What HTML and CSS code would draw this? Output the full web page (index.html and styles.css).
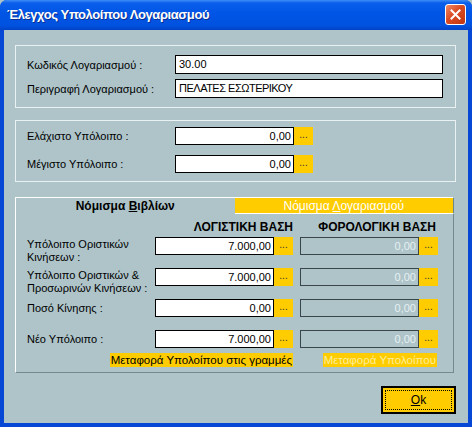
FILE: index.html
```html
<!DOCTYPE html>
<html lang="el">
<head>
  <meta charset="UTF-8">
  <title>Έλεγχος Υπολοίπου Λογαριασμού</title>
  <link rel="stylesheet" href="styles.css">
</head>
<body>
  <div class="window">
    <div class="titlebar">
      <span class="title">Έλεγχος Υπολοίπου Λογαριασμού</span>
      <span class="close">
        <svg width="11" height="11" viewBox="0 0 11 11"><path d="M1.5 1.5 L9.5 9.5 M9.5 1.5 L1.5 9.5" stroke="#fff" stroke-width="2" stroke-linecap="square"/></svg>
      </span>
    </div>

    <div class="client">
      <!-- account -->
      <div class="group group-account">
        <div class="row">
          <span class="label">Κωδικός Λογαριασμού :</span>
          <div class="field field-wide">30.00</div>
        </div>
        <div class="row">
          <span class="label">Περιγραφή Λογαριασμού :</span>
          <div class="field field-wide caps">ΠΕΛΑΤΕΣ ΕΣΩΤΕΡΙΚΟΥ</div>
        </div>
      </div>

      <!-- limits -->
      <div class="group group-limits">
        <div class="row">
          <span class="label">Ελάχιστο Υπόλοιπο :</span>
          <div class="amount">
            <div class="field num">0,00</div>
            <span class="dots">...</span>
          </div>
        </div>
        <div class="row">
          <span class="label">Μέγιστο Υπόλοιπο :</span>
          <div class="amount">
            <div class="field num">0,00</div>
            <span class="dots">...</span>
          </div>
        </div>
      </div>

      <!-- tabs -->
      <div class="tabs">
        <div class="tab-strip">
          <div class="tab active">Νόμισμα <u>Β</u>ιβλίων</div>
          <div class="tab">Νόμισμα <u>Λ</u>ογαριασμού</div>
        </div>
        <div class="panel">
          <div class="grid head">
            <span></span>
            <span class="col-head">ΛΟΓΙΣΤΙΚΗ ΒΑΣΗ</span>
            <span class="col-head">ΦΟΡΟΛΟΓΙΚΗ ΒΑΣΗ</span>
          </div>

          <div class="grid line first">
            <span class="label two">Υπόλοιπο Οριστικών<br>Κινήσεων :</span>
            <div class="amount"><div class="field num">7.000,00</div><span class="dots">...</span></div>
            <div class="amount"><div class="field num off">0,00</div><span class="dots">...</span></div>
          </div>

          <div class="grid line">
            <span class="label two">Υπόλοιπο Οριστικών &amp;<br>Προσωρινών Κινήσεων :</span>
            <div class="amount"><div class="field num">7.000,00</div><span class="dots">...</span></div>
            <div class="amount"><div class="field num off">0,00</div><span class="dots">...</span></div>
          </div>

          <div class="grid line">
            <span class="label">Ποσό Κίνησης :</span>
            <div class="amount"><div class="field num">0,00</div><span class="dots">...</span></div>
            <div class="amount"><div class="field num off">0,00</div><span class="dots">...</span></div>
          </div>

          <div class="grid line">
            <span class="label">Νέο Υπόλοιπο :</span>
            <div class="amount"><div class="field num">7.000,00</div><span class="dots">...</span></div>
            <div class="amount"><div class="field num off">0,00</div><span class="dots">...</span></div>
          </div>

          <div class="grid links">
            <span class="link">Μεταφορά Υπολοίπου στις γραμμές</span>
            <span class="link disabled">Μεταφορά Υπολοίπου</span>
          </div>
        </div>
      </div>

      <div class="footer">
        <div class="ok"><span class="focus"><u>O</u>k</span></div>
      </div>
    </div>
  </div>
</body>
</html>
```

FILE: styles.css
```css
* {
  margin: 0;
  padding: 0;
  box-sizing: border-box;
}

body {
  font-family: 'Liberation Sans', Arial, sans-serif;
  font-size: 11px;
  color: #000;
  background: #aec4c9;
}

.window {
  width: 472px;
  height: 427px;
  display: flex;
  flex-direction: column;
  background: #0747d6;
  border-radius: 7px 7px 0 0;
  overflow: hidden;
}

.titlebar {
  height: 30px;
  flex-shrink: 0;
  display: flex;
  align-items: center;
  justify-content: space-between;
  padding: 0 6px 1px 7px;
  background: linear-gradient(to bottom, #3d8cf6 0, #0a5eea 3px, #0055e6 45%, #0052df 85%, #0043c6 100%);
}

.title {
  color: #fff;
  font-weight: bold;
  font-size: 13px;
  letter-spacing: -0.4px;
  text-shadow: 1px 1px 0 #0a2f8f;
}

.close {
  width: 21px;
  height: 21px;
  display: flex;
  align-items: center;
  justify-content: center;
  border: 1px solid #fff;
  border-radius: 3px;
  background: linear-gradient(135deg, #ef8a68, #db4b22 45%, #c0360f);
}

.client {
  flex: 1;
  margin: 0 4px 4px 4px;
  background: #aec4c9;
  padding: 15px 12px 0 11px;
}

.group {
  border: 1px solid #e9f1f3;
  padding-left: 11px;
}

.group-account {
  height: 63px;
  padding-top: 9px;
}

.group-limits {
  height: 62px;
  margin-top: 12px;
  padding-top: 6px;
}

.row {
  display: flex;
  align-items: center;
}

.group-account .row + .row {
  margin-top: 5px;
}

.group-limits .row + .row {
  margin-top: 10px;
}

.group .label {
  width: 148px;
}

.field {
  height: 19px;
  line-height: 17px;
  background: #fff;
  border: 1px solid #000;
  padding: 0 3px;
  white-space: nowrap;
  overflow: hidden;
}

.field-wide {
  width: 268px;
}

.caps {
  letter-spacing: -0.5px;
}

.group-limits .field {
  height: 18px;
  line-height: 16px;
}

.amount {
  display: flex;
  width: 138px;
  height: 18px;
}

.amount .field {
  flex: 1;
  height: 18px;
  line-height: 16px;
}

.num {
  text-align: right;
  padding: 0 2px;
}

.off {
  background: #aec4c9;
  border-color: #3a4648;
  color: #e6f0f2;
}

.dots {
  width: 19px;
  background: #ffcc00;
  font-size: 10px;
  line-height: 16px;
  text-align: center;
  color: #333;
}

.tabs {
  margin-top: 15px;
  width: 439px;
}

.tab-strip {
  display: flex;
  height: 17px;
}

.tab {
  flex: 1;
  text-align: center;
  line-height: 16px;
  font-size: 12px;
  border-top: 1px solid #fff;
}

.tab.active {
  font-weight: bold;
  border-left: 1px solid #fff;
}

.tab:not(.active) {
  background: #ffcc00;
  color: #fff;
  border-right: 1px solid #6f868b;
  border-bottom: 1px solid #fff;
}

.panel {
  height: 159px;
  border-left: 1px solid #fff;
  border-right: 1px solid #72898e;
  border-bottom: 1px solid #72898e;
  padding: 5px 0 0 11px;
}

.grid {
  display: grid;
  grid-template-columns: 121px 138px 136px;
  column-gap: 7px;
}

.head {
  height: 18px;
  line-height: 17px;
}

.col-head {
  text-align: right;
  font-weight: bold;
  font-size: 12px;
}

.line {
  height: 18px;
  margin-top: 14px;
}

.line.first {
  margin-top: 0;
}

.line + .line:not(.first) {
  margin-top: 13px;
}

.line .label {
  line-height: 18px;
  white-space: nowrap;
}

.line .label.two {
  line-height: 13px;
  padding-top: 1px;
}

.links {
  margin-top: 5px;
  height: 14px;
}

.link {
  background: #ffcc00;
  font-size: 11.5px;
  line-height: 14px;
  padding: 0 1px;
  white-space: nowrap;
}

.link:first-child {
  grid-column: 1 / span 2;
  justify-self: end;
}

.link.disabled {
  justify-self: end;
  color: #ffee99;
  margin-right: -1px;
}

.footer {
  display: flex;
  justify-content: flex-end;
  margin-top: 13px;
}

.ok {
  width: 75px;
  height: 28px;
  background: #ffcc00;
  border: 2px solid #000;
  padding: 2px;
  font-size: 12px;
}

.focus {
  display: block;
  height: 100%;
  border: 1px dotted #000;
  text-align: center;
  line-height: 18px;
}
```
